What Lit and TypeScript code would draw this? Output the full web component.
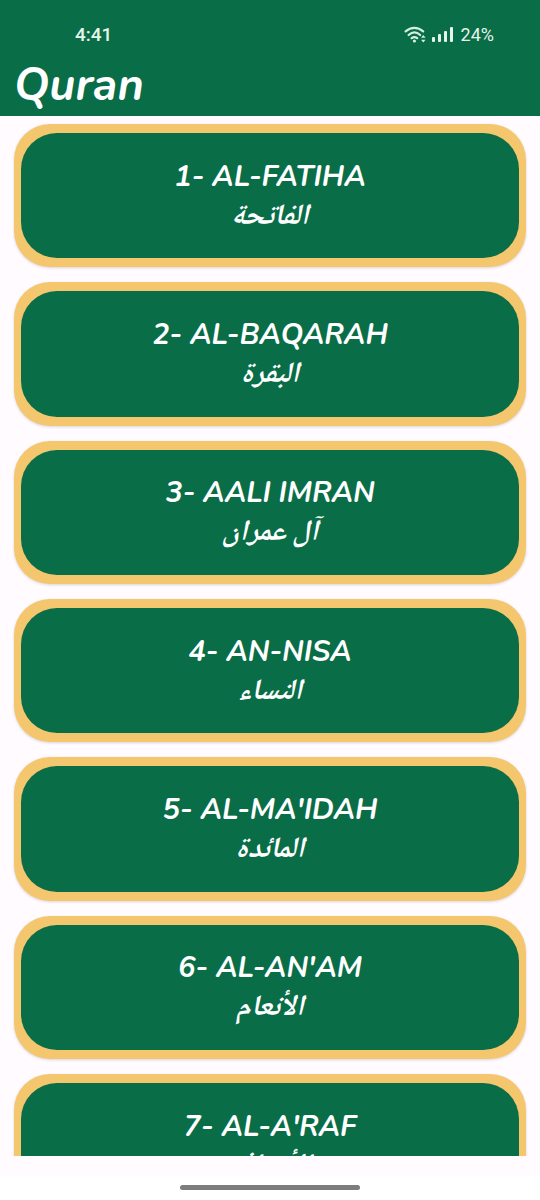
import { LitElement, html, css } from "lit";
import { customElement, property } from "lit/decorators.js";

interface Surah {
  number: number;
  name: string;
  arabic: string;
}

const SURAHS: Surah[] = [
  { number: 1, name: "AL-FATIHA", arabic: "الفاتحة" },
  { number: 2, name: "AL-BAQARAH", arabic: "البقرة" },
  { number: 3, name: "AALI IMRAN", arabic: "آل عمران" },
  { number: 4, name: "AN-NISA", arabic: "النساء" },
  { number: 5, name: "AL-MA'IDAH", arabic: "المائدة" },
  { number: 6, name: "AL-AN'AM", arabic: "الأنعام" },
  { number: 7, name: "AL-A'RAF", arabic: "الأعراف" },
];

@customElement("status-bar")
export class StatusBar extends LitElement {
  static styles = css`
    :host {
      display: flex;
      align-items: center;
      justify-content: space-between;
      padding: 24px 46px 0 75px;
      font: 400 18px/22px Roboto, sans-serif;
      color: #e6f5ea;
    }
    .clock {
      font-size: 19px;
      font-weight: 500;
    }
    .indicators {
      display: flex;
      align-items: center;
      gap: 6px;
    }
    .signals {
      display: block;
    }
  `;

  render() {
    return html`
      <span class="clock">4:41</span>
      <span class="indicators">
        <svg class="signals" width="51" height="18" viewBox="0 0 51 18" aria-hidden="true">
          <g fill="none" stroke="#d5efdc" stroke-width="2.200" stroke-linecap="round">
            <path d="M1.600 5.400C7 .6 13.800 .6 19.200 5.400" />
            <path d="M4.600 9C8.200 5.800 12.600 5.800 16.200 9" />
            <path d="M7.600 12.200C9.400 10.700 11.400 10.700 13.200 12.200" />
          </g>
          <circle cx="10.400" cy="15" r="1.600" fill="#d5efdc" />
          <path d="M17 11.800 19.300 9l2.300 2.800zM17 13.800h4.600l-2.300 2.800z" fill="#d5efdc" />
          <g fill="#e6f5ea">
            <rect x="28" y="11" width="3" height="5" rx="1" />
            <rect x="34" y="8" width="3" height="8" rx="1" />
            <rect x="40" y="5" width="3" height="11" rx="1" />
            <rect x="46" y="1" width="3" height="15" rx="1" />
          </g>
        </svg>
        <span>24%</span>
      </span>
    `;
  }
}

@customElement("surah-card")
export class SurahCard extends LitElement {
  @property({ attribute: false }) surah!: Surah;

  static styles = css`
    :host {
      display: block;
    }
    .card {
      display: flex;
      box-sizing: border-box;
      width: 100%;
      aspect-ratio: 25 / 7;
      margin: 0;
      padding: 9px 7px;
      border: 0;
      border-radius: 36px;
      background: #f4c76e;
      box-shadow: 0 1px 3px rgba(0, 0, 0, 0.16);
      color: #ffffff;
      font: italic 700 29px/38px Nunito, Lato, sans-serif;
      cursor: pointer;
    }
    .face {
      display: flex;
      flex: 1;
      flex-direction: column;
      gap: 3px;
      align-items: center;
      align-self: stretch;
      justify-content: center;
      padding-top: 3px;
      border-radius: 36px;
      background: #096d47;
    }
    .arabic {
      font-family: "Noto Naskh Arabic", "Noto Naskh Arabic UI", Amiri, "Noto Sans Arabic", "DejaVu Sans", serif;
    }
  `;

  render() {
    const { number, name, arabic } = this.surah;
    return html`
      <button class="card" type="button">
        <span class="face">
          <span>${number}- ${name}</span>
          <span class="arabic" lang="ar" dir="rtl">${arabic}</span>
        </span>
      </button>
    `;
  }
}

@customElement("app-root")
export class AppRoot extends LitElement {
  static styles = css`
    :host {
      display: flex;
      flex-direction: column;
      height: 100vh;
      background: #fffbff;
    }
    .header {
      flex: none;
      background: #096d47;
      color: #ffffff;
    }
    .title {
      margin: 0;
      padding: 14px 14px 4px;
      font: italic 700 45px/52px Nunito, Lato, sans-serif;
    }
    .list {
      display: flex;
      flex: 1;
      flex-direction: column;
      gap: 15px;
      min-height: 0;
      margin: 0 0 20px;
      padding: 8px 14px;
      overflow-y: auto;
      scrollbar-width: none;
      list-style: none;
    }
    .item {
      flex: none;
    }
    .navigation {
      display: flex;
      flex: none;
      justify-content: center;
      padding: 9px 0 10px;
      background: #ffffff;
    }
    .handle {
      width: 180px;
      height: 5px;
      border-radius: 3px;
      background: #7d7d7d;
    }
  `;

  render() {
    return html`
      <header class="header">
        <status-bar></status-bar>
        <h1 class="title">Quran</h1>
      </header>
      <ul class="list">
        ${SURAHS.map(
          (surah) => html`<li class="item"><surah-card .surah=${surah}></surah-card></li>`
        )}
      </ul>
      <div class="navigation"><div class="handle"></div></div>
    `;
  }
}
